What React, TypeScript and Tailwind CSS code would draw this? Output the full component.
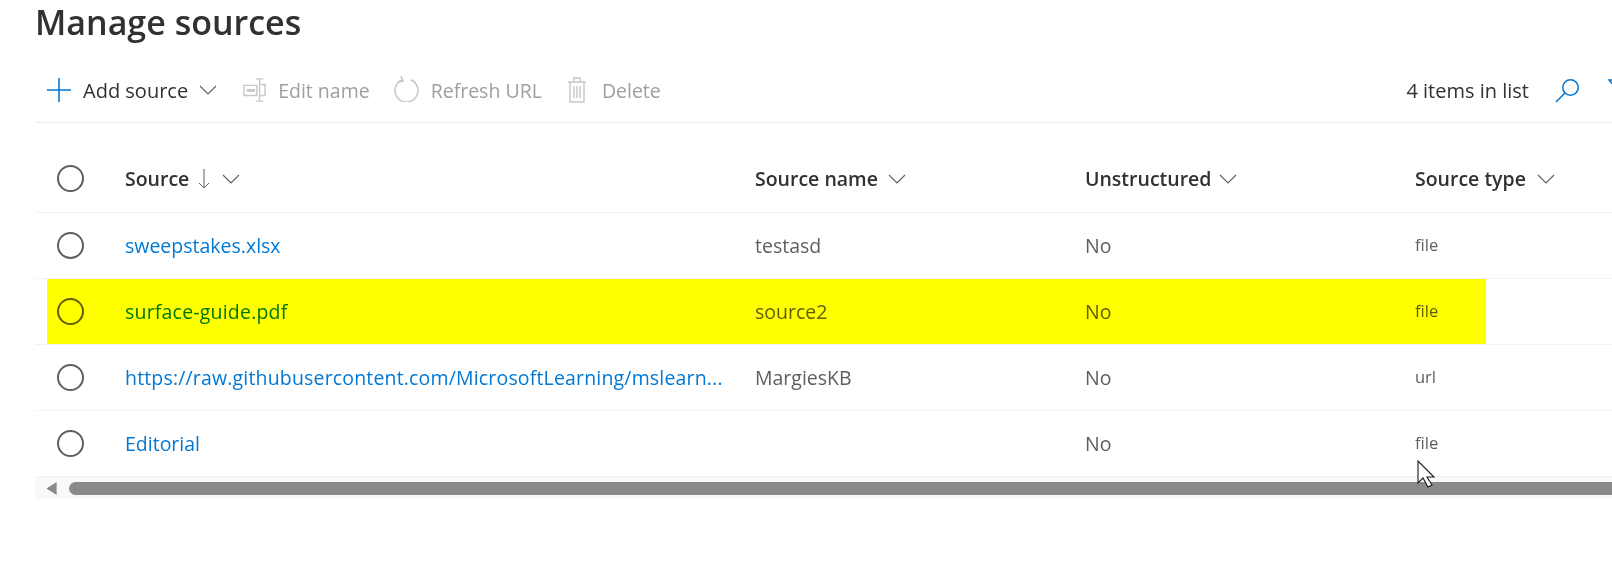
function Chevron({ className }: { className?: string }) {
  return (
    <svg viewBox="0 0 18 10" className={className} fill="none" stroke="currentColor" strokeWidth="1.1">
      <path d="M1 1l8 8 8-8" />
    </svg>
  );
}
function Radio() {
  return <div className="w-[27px] h-[27px] rounded-full border-2 border-[#605e5c] shrink-0" />;
}
function Check({ children }: { children?: React.ReactNode }) {
  return <div className="w-[90px] pl-[22px] shrink-0 flex items-center">{children}</div>;
}
function Header({ w, label, arrow, gap }: { w: string; label: string; arrow?: boolean; gap: string }) {
  return (
    <div className={`${w} shrink-0 flex items-center text-[#323130] font-semibold text-[19.5px]`}>
      <span>{label}</span>
      {arrow && <svg viewBox="0 0 12 20" className="w-[12px] h-[20px] ml-[9px]" fill="none" stroke="#605e5c" strokeWidth="1"><path d="M6 0v19M1 14l5 5 5-5" /></svg>}
      <Chevron className={`w-[18px] h-[10px] text-[#605e5c] ${gap}`} />
    </div>
  );
}
const rows = [
  { s: "sweepstakes.xlsx", n: "testasd", t: "file", c: "" },
  { s: "surface-guide.pdf", n: "source2", t: "file", hi: true, c: "tracking-[0.2px]" },
  { s: "https://raw.githubusercontent.com/MicrosoftLearning/mslearn...", n: "MargiesKB", t: "url", c: "tracking-[0.17px]" },
  { s: "Editorial", n: "", t: "file", c: "" },
];
function Row({ r }: { r: (typeof rows)[number] }) {
  return (
    <div className="h-[66px] flex items-center border-b-[1.5px] border-[#f3f2f1] relative text-[19.5px]">
      {r.hi && <div className="absolute left-[12px] top-0 bottom-0 w-[1439px] bg-[#ffff00] mix-blend-multiply" />}
      <Check><Radio /></Check>
      <div className={`w-[630px] shrink-0 text-[#0078d4] whitespace-nowrap overflow-hidden ${r.c}`}>{r.s}</div>
      <div className="w-[330px] shrink-0 text-[#605e5c]">{r.n}</div>
      <div className="w-[330px] shrink-0 text-[#605e5c]">No</div>
      <div className="text-[#605e5c] text-[16.5px]">{r.t}</div>
    </div>
  );
}
function Cmd({ icon, label, cls }: { icon: React.ReactNode; label: string; cls: string }) {
  return (
    <div className={`flex items-center ${cls}`}>
      {icon}
      <span className="text-[#a19f9d]">{label}</span>
    </div>
  );
}
export default function App() {
  return (
    <div className="w-[1612px] h-[569px] overflow-hidden bg-white pl-[35px] relative" style={{ fontFamily: '"Open Sans", "Noto Sans", sans-serif' }}>
      <h1 className="text-[34px] leading-[44px] font-semibold text-[#323130] h-[68px]">Manage sources</h1>
      <div className="h-[55px] flex items-center border-b-[1.5px] border-[#edebe9] text-[19.5px] pl-[12px] pb-[8px]">
        <svg viewBox="0 0 24 24" className="w-[24px] h-[24px] mr-[12px] -translate-y-px" stroke="#0078d4" strokeWidth="1.6"><path d="M0 12h24M12 0v24" /></svg>
        <span className="text-[#323130] text-[20px]">Add source</span>
        <Chevron className="w-[18px] h-[10px] ml-[11px] mr-[25px] text-[#605e5c] -translate-y-px" />
        <Cmd cls="mr-[23px]" label="Edit name" icon={<svg viewBox="0 0 25 26" className="w-[25px] h-[24px] mr-[11px] -translate-y-px" fill="none" stroke="#c8c6c4" strokeWidth="1.5"><path d="M1 8h14v11H1zM19 7h5v12h-5M18 1v24M14 1h8M14 25h8" /><path d="M4 12h9v3H4z" fill="#c8c6c4" stroke="none" /></svg>} />
        <Cmd cls="mr-[25px]" label="Refresh URL" icon={<svg viewBox="0 0 25 26" className="w-[25px] h-[26px] mr-[13px] -translate-y-[2px] translate-x-px" fill="none" stroke="#c8c6c4" strokeWidth="1.5"><path d="M16.5 3.8A11.5 11.5 0 1 1 8.5 3.8" /><path d="M7 0l2 5-5.500 1.500" /></svg>} />
        <Cmd cls="" label="Delete" icon={<svg viewBox="0 0 20 26" className="w-[20px] h-[26px] mr-[15px] -translate-y-px" fill="none" stroke="#c8c6c4" strokeWidth="1.4"><path d="M1 5h18M3 5v20h14V5M7 5V1h6v4M7 9v12M10 9v12M13 9v12" /></svg>} />
        <div className="ml-auto flex items-center mr-[-20px]">
          <span className="text-[#323130] text-[20px]">4 items in list</span>
          <svg viewBox="0 0 24 24" className="w-[24px] h-[24px] ml-[26px]" fill="none" stroke="#0078d4" strokeWidth="1.6"><circle cx="15.500" cy="8.500" r="7.700" /><path d="M10 14L1 23" /></svg>
          <svg viewBox="0 0 24 24" className="w-[24px] h-[24px] ml-[29px] -translate-y-px" fill="none" stroke="#0078d4" strokeWidth="1.6"><path d="M1 2h22l-9 10v10l-4-3v-7z" /></svg>
        </div>
      </div>
      <div className="h-[90px] pt-[22px] flex items-center border-b-[1.5px] border-[#f3f2f1]">
        <Check><Radio /></Check>
        <Header w="w-[630px]" label="Source" arrow gap="ml-[12px]" />
        <Header w="w-[330px]" label="Source name" gap="ml-[10px]" />
        <Header w="w-[330px]" label="Unstructured" gap="ml-[8px]" />
        <Header w="w-[200px]" label="Source type" gap="ml-[11px]" />
      </div>
      {rows.map((r) => <Row key={r.s} r={r} />)}
      <div className="h-[22px] bg-[#faf9f8] flex items-start pl-[11px] pt-[5px]">
        <svg viewBox="0 0 11 14" className="w-[11px] h-[13px] mr-[12px]" fill="#8a8a8a"><path d="M11 0v14L0 7z" /></svg>
        <div className="h-[13px] flex-1 bg-[#8a8a8a] rounded-l-full" />
      </div>
      <svg viewBox="0 0 19 28" className="absolute left-[1417px] top-[460px] w-[19px] h-[28px]" fill="#fff" stroke="#1a1a1a" strokeWidth="1.1"><path d="M1 1v22l5-5 5 9 4-2-5-8h7z" /></svg>
    </div>
  );
}
